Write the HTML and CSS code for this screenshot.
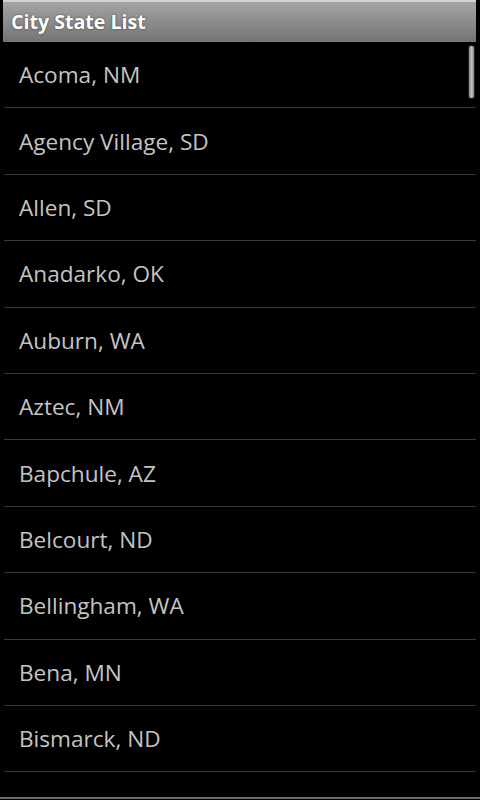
FILE: index.html
```html
<!DOCTYPE html>
<html>
<head>
<meta charset="utf-8">
<link rel="stylesheet" href="styles.css">
</head>
<body>
<div class="screen">
  <div class="titlebar"><span class="title">City State List</span></div>
  <div class="list">
    <div class="row">Acoma, NM</div>
    <div class="row">Agency Village, SD</div>
    <div class="row">Allen, SD</div>
    <div class="row">Anadarko, OK</div>
    <div class="row">Auburn, WA</div>
    <div class="row">Aztec, NM</div>
    <div class="row">Bapchule, AZ</div>
    <div class="row">Belcourt, ND</div>
    <div class="row">Bellingham, WA</div>
    <div class="row">Bena, MN</div>
    <div class="row">Bismarck, ND</div>
    <div class="row"></div>
    <div class="scrollbar"></div>
  </div>
  <div class="bottomline"></div>
</div>
</body>
</html>
```
FILE: styles.css
```css
html, body {
  margin: 0;
  padding: 0;
  background: #000;
}
.screen {
  width: 480px;
  height: 800px;
  overflow: hidden;
  display: flex;
  flex-direction: column;
  background: #000;
  font-family: "Open Sans", "DejaVu Sans", sans-serif;
}
.titlebar {
  height: 40px;
  flex: none;
  margin: 0 4px 0 3px;
  border-top: 2px solid #d2d2d2;
  background: linear-gradient(#a4a4a4, #747474);
  display: flex;
  align-items: center;
  padding-left: 8px;
}
.title {
  color: #fff;
  font-weight: bold;
  font-size: 19.6px;
  text-shadow: 0 0 2px #333;
  position: relative;
  top: -1px;
}
.list {
  flex: 1;
  position: relative;
  overflow: hidden;
  margin: 0 4px;
}
.row {
  height: 65.4px;
  border-bottom: 1px solid #383838;
  display: flex;
  align-items: center;
  padding-left: 15px;
  color: #c4c4c4;
  font-size: 22.6px;
}
.scrollbar {
  position: absolute;
  right: 1px;
  top: 3px;
  width: 5px;
  height: 52px;
  border-radius: 3px;
  background: linear-gradient(90deg, #8a8a8a, #c0c0c0 50%, #8a8a8a);
  border: 1px solid #222;
}
.bottomline {
  height: 2px;
  flex: none;
  background: #6a6a6a;
  margin-bottom: 1px;
}
```
